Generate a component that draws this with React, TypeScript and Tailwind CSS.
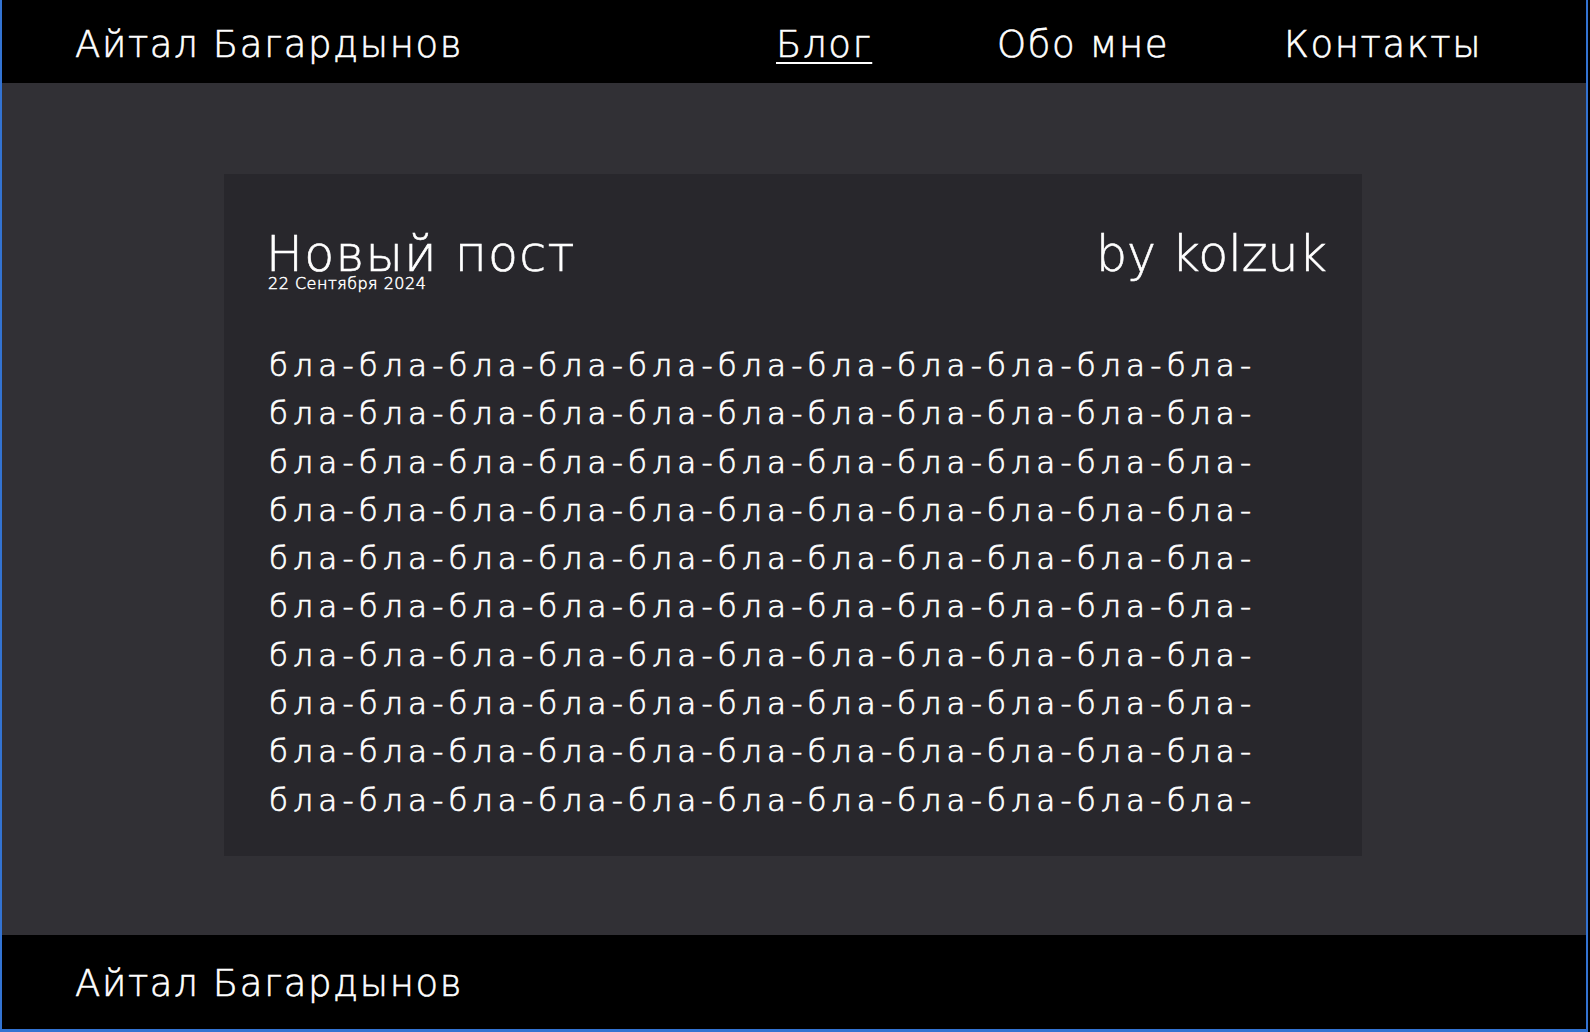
import React from "react";

const FONT = { fontFamily: '"DejaVu Sans", "Noto Sans", sans-serif' };

const lines = Array.from({ length: 10 }, () => "бла-".repeat(11));

export default function App() {
  return (
    <div className="w-[1590px] h-[1032px] bg-black overflow-hidden" style={FONT}>
      <div className="w-[1588px] h-[1032px] flex flex-col border-l-2 border-r-2 border-b-[3px] border-[#3373d2] text-white">
        <header className="h-[83px] shrink-0 bg-black flex items-start pt-[26px] pl-[73px]">
          <div className="w-[701px] text-[37px] leading-[37px] font-light tracking-[1.6px] [-webkit-text-stroke:0.6px_white]">
            Айтал Багардынов
          </div>
          <nav className="flex text-[37px] leading-[37px] font-light tracking-[1.6px] [-webkit-text-stroke:0.6px_white]">
            <a className="w-[221px] block">
              <span className="underline decoration-2 underline-offset-[5px]">Блог</span>
            </a>
            <a className="w-[287px] block">Обо мне</a>
            <a className="block">Контакты</a>
          </nav>
        </header>

        <main className="h-[852px] shrink-0 bg-[#313035] pt-[91px]">
          <section className="ml-[222px] w-[1138px] h-[682px] bg-[#28272c] pl-[42px] pr-[35px] pt-[60px]">
            <div className="flex justify-between items-start">
              <div className="flex flex-col">
                <h1 className="text-[49px] leading-[42px] font-light tracking-[1.3px] [-webkit-text-stroke:0.6px_white]">
                  Новый пост
                </h1>
                <div className="mt-[1px] ml-[2px] text-[16px] leading-[14px] font-light tracking-[0.5px] [-webkit-text-stroke:0.5px_white]">
                  22 Сентября 2024
                </div>
              </div>
              <div className="text-[49px] leading-[42px] font-light [-webkit-text-stroke:0.6px_white]">
                by kolzuk
              </div>
            </div>
            <div className="mt-[50px] ml-[3px] text-[31px] leading-[48.3px] font-light tracking-[5.2px] [-webkit-text-stroke:0.7px_white] whitespace-nowrap">
              {lines.map((l, i) => (
                <div key={i}>{l}</div>
              ))}
            </div>
          </section>
        </main>

        <footer className="h-[94px] shrink-0 bg-black pt-[30px] pl-[73px]">
          <div className="text-[37px] leading-[37px] font-light tracking-[1.6px] [-webkit-text-stroke:0.6px_white]">
            Айтал Багардынов
          </div>
        </footer>
      </div>
    </div>
  );
}
